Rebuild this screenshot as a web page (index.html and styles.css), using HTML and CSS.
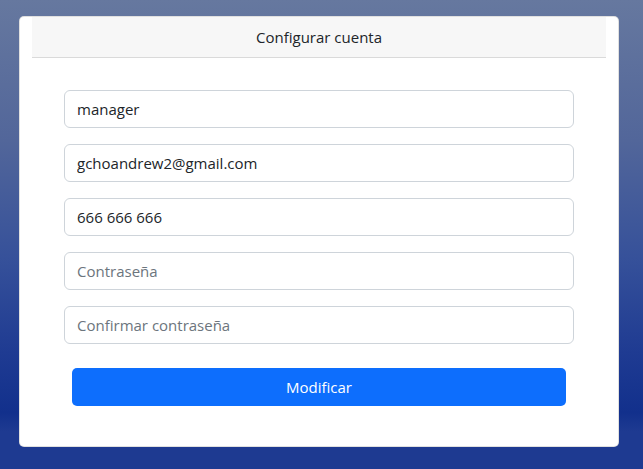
FILE: index.html
```html
<!DOCTYPE html>
<html lang="es">
<head>
<meta charset="utf-8">
<title>Configurar cuenta</title>
<link rel="stylesheet" href="styles.css">
</head>
<body>
<div class="card">
  <div class="card-header">Configurar cuenta</div>
  <form class="account-form">
    <input class="field" type="text" value="manager">
    <input class="field" type="email" value="gchoandrew2@gmail.com">
    <input class="field" type="tel" value="666 666 666">
    <input class="field" type="password" placeholder="Contraseña">
    <input class="field" type="password" placeholder="Confirmar contraseña">
    <button class="submit" type="button">Modificar</button>
  </form>
</div>
</body>
</html>
```
FILE: styles.css
```css
html, body {
  margin: 0;
  height: 100%;
}
body {
  font-family: "Open Sans", "Noto Sans", sans-serif;
  font-size: 15px;
  color: #212529;
  background: linear-gradient(180deg, #66789f 0%, #52669a 30%, #36519a 55%, #1f3b92 75%, #12308c 88%, #1e3a91 92%, #1e3a91 100%);
  padding-top: 16px;
  box-sizing: border-box;
}
.card {
  margin-left: 19px;
  width: 600px;
  box-sizing: border-box;
  background: #fff;
  border: 1px solid rgba(0,0,0,0.12);
  border-radius: 5px;
  padding: 0 12px 40px;
}
.card-header {
  height: 40px;
  line-height: 40px;
  text-align: center;
  background: #f7f7f7;
  border-bottom: 1px solid #dadada;
}
.account-form {
  display: flex;
  flex-direction: column;
  gap: 16px;
  padding: 32px 32px 0;
}
.field {
  height: 38px;
  box-sizing: border-box;
  border: 1px solid #ced4da;
  border-radius: 6px;
  padding: 6px 12px;
  font-family: inherit;
  font-size: 15px;
  color: #212529;
  background: #fff;
  outline: none;
}
.field::placeholder {
  color: #6c757d;
}
.submit {
  margin: 8px 8px 0;
  height: 38px;
  border: none;
  border-radius: 5px;
  background: #0d6efd;
  color: #fff;
  font-family: inherit;
  font-size: 15px;
  cursor: pointer;
}
```
